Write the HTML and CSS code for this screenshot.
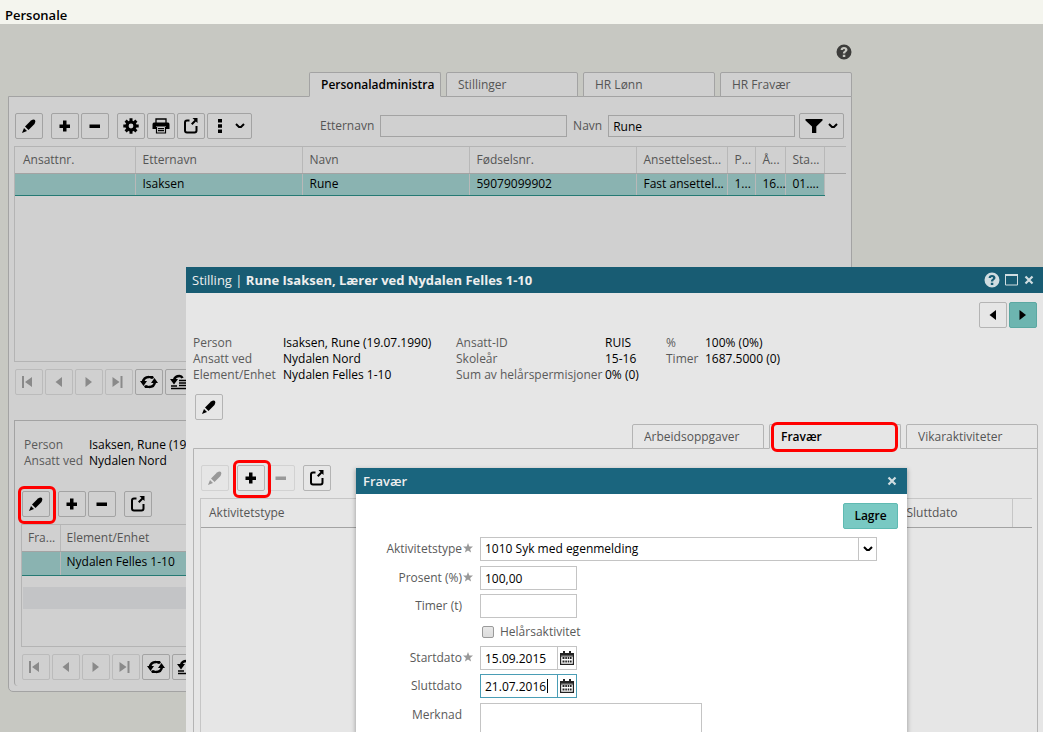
FILE: index.html
```html
<!DOCTYPE html>
<html lang="nb">
<head>
<meta charset="utf-8">
<title>Personale</title>
<link rel="stylesheet" href="styles.css">
</head>
<body>
<svg class="sprite" aria-hidden="true">
  <symbol id="pencil" viewBox="0 0 16 16"><path d="M1 15l2-5 3 3z"/><path d="M4 8.500L10 2.500Q12.500 1 14 2 15 3.500 13.500 6L7.500 12z"/></symbol>
  <symbol id="plus" viewBox="0 0 16 16"><path d="M6 2.500h3.500v4H13V10H9.500v3.500H6V10H2.500V6.500H6z"/></symbol>
  <symbol id="minus" viewBox="0 0 16 16"><path d="M2.500 6.500h10.500V10H2.500z"/></symbol>
  <symbol id="gear" viewBox="0 0 16 16"><g fill="none" stroke="currentColor"><circle cx="8" cy="8" r="4" stroke-width="3.200"/><path stroke-width="3" d="M8 .3v3M8 12.700v3M.3 8h3M12.700 8h3M2.600 2.600l2 2M11.400 11.400l2 2M2.600 13.400l2-2M11.400 4.600l2-2"/></g></symbol>
  <symbol id="print" viewBox="0 0 18 16"><path d="M4 5V1h10v4" fill="none" stroke="currentColor" stroke-width="1.300"/><path d="M2 4.500h14q1.500 0 1.500 2V11H14V8.500H4V11H.5V6.500q0-2 1.500-2z"/><path d="M4.500 9v6h9V9M6 10.700h6M6 12.700h6" fill="none" stroke="currentColor" stroke-width="1.200"/></symbol>
  <symbol id="export" viewBox="0 0 16 16"><path d="M6.500 2.500H4Q2 2.500 2 4.500v8q0 2 2 2h7.500q2 0 2-2V8" fill="none" stroke="currentColor" stroke-width="2"/><path d="M9.500 0h5v5l-1.600-1.600L9.500 7 8 5.500l3.500-3.500z"/></symbol>
  <symbol id="dots" viewBox="0 0 6 16"><path d="M1 1h4v3.500H1zM1 6.300h4v3.500H1zM1 11.600h4V15H1z"/></symbol>
  <symbol id="chevron" viewBox="0 0 10 8"><path d="M1 2l3 3h2l3-3" fill="none" stroke="currentColor" stroke-width="2"/></symbol>
  <symbol id="funnel" viewBox="0 0 17 16"><path d="M0 1h17v1.500L10.800 8.500V15H6.500V8.500L0 2.500z"/></symbol>
  <symbol id="first" viewBox="0 0 16 16"><path d="M1 2h2v12H1zM11 3v10L4 8z"/></symbol>
  <symbol id="prev" viewBox="0 0 16 16"><path d="M11 3v10L4.500 8z"/></symbol>
  <symbol id="next" viewBox="0 0 16 16"><path d="M4.500 3v10L11 8z"/></symbol>
  <symbol id="last" viewBox="0 0 16 16"><path d="M9.500 2h2v12h-2zM1.500 3v10l7-5z"/></symbol>
  <symbol id="refresh" viewBox="0 0 18 16"><path d="M3 8.500Q3.500 3 9 3M15 7.500Q14.500 13 9 13" fill="none" stroke="currentColor" stroke-width="2.600"/><path d="M0 7h7l-3.500 5zM18 9h-7l3.500-5z"/><path d="M9 2h4l1 2-2 1-3-1zM9 14H5l-1-2 2-1 3 1z"/></symbol>
  <symbol id="reload" viewBox="0 0 18 16"><path d="M4 6Q5 2 9.500 2q2 0 3 2" fill="none" stroke="currentColor" stroke-width="2.600"/><path d="M0 5h8l-4 5.500z"/><path d="M9 6.500h8M9 9h8M9 11.500h8M1 12h6M1 14.500h16" fill="none" stroke="currentColor" stroke-width="1.500"/></symbol>
  <symbol id="help" viewBox="0 0 16 16"><path fill-rule="evenodd" d="M8 .5a7.500 7.500 0 1 0 0 15 7.500 7.500 0 0 0 0-15zM4.600 6C4.700 4 6 2.900 8 2.900s3.500 1.100 3.500 2.900c0 2-2.300 2.200-2.300 3.500v.3H6.900v-.7c0-1.700 2.100-1.800 2.100-3 0-.5-.4-.9-1-.9S7 5.400 6.900 6zM6.800 10.700h2.500v2.300H6.800z"/></symbol>
  <symbol id="square" viewBox="0 0 14 12"><path d="M.5 1h12v10H.5z" fill="none" stroke="currentColor"/><path d="M0 0h13v2H0z"/></symbol>
  <symbol id="cross" viewBox="0 0 10 10"><path d="M1.500 1.500l7 7M8.500 1.500l-7 7" fill="none" stroke="currentColor" stroke-width="2.200"/></symbol>
  <symbol id="star" viewBox="0 0 10 10"><path d="M5 0l1.300 3.500L10 3.600 7.100 5.900 8.100 9.600 5 7.500 1.900 9.600l1-3.700L0 3.600l3.700-.1z"/></symbol>
  <symbol id="calendar" viewBox="0 0 14 14"><path d="M.6 2.600h12.800v10.800H.6zM.6 4.800h12.800" fill="none" stroke="currentColor" stroke-width="1.200"/><path d="M3 0h2v3.500H3zM9 0h2v3.500H9zM1 2.500h12V4H1zM2.500 6h2v2h-2zM5.300 6h1.600v2H5.300zM7.700 6h1.600v2H7.700zM10 6h1.600v2H10zM2.500 9.500h2v2h-2zM5.300 9.500h1.600v2H5.300zM7.700 9.500h1.600v2H7.700zM10 9.500h1.600v2H10z"/></symbol>
</svg>

<header class="top"><h1>Personale</h1></header>

<main class="page">
  <div class="help-row"><button class="bare" aria-label="Hjelp"><svg class="i16"><use href="#help"/></svg></button></div>
  <nav class="tabs" aria-label="Personale">
    <button class="tab active"><span>Personaladministra</span></button>
    <button class="tab"><span>Stillinger</span></button>
    <button class="tab"><span>HR Lønn</span></button>
    <button class="tab"><span>HR Fravær</span></button>
  </nav>
  <section class="panel">
    <div class="toolbar">
      <button class="btn" aria-label="Rediger"><svg class="i16"><use href="#pencil"/></svg></button>
      <div class="group">
        <button class="btn" aria-label="Ny"><svg class="i16"><use href="#plus"/></svg></button>
        <button class="btn" aria-label="Slett"><svg class="i16"><use href="#minus"/></svg></button>
      </div>
      <div class="group">
        <button class="btn" aria-label="Innstillinger"><svg class="i16"><use href="#gear"/></svg></button>
        <button class="btn" aria-label="Skriv ut"><svg class="i18"><use href="#print"/></svg></button>
        <button class="btn" aria-label="Eksporter"><svg class="i16"><use href="#export"/></svg></button>
        <button class="btn wide" aria-label="Mer"><svg class="dots"><use href="#dots"/></svg><svg class="chev"><use href="#chevron"/></svg></button>
      </div>
      <form class="search">
        <label for="etternavn">Etternavn</label><input id="etternavn" class="text" type="text">
        <label for="navn">Navn</label><input id="navn" class="text" type="text" value="Rune">
        <button type="button" class="btn wide filter" aria-label="Filter"><svg class="i18"><use href="#funnel"/></svg><svg class="chev"><use href="#chevron"/></svg></button>
      </form>
    </div>
    <div class="grid people">
      <table>
        <colgroup><col class="c120"><col class="c167"><col class="c167"><col class="c167"><col class="c91"><col class="c28"><col class="c30"><col class="c39"><col></colgroup>
        <thead><tr><th>Ansattnr.</th><th>Etternavn</th><th>Navn</th><th>Fødselsnr.</th><th>Ansettelsest...</th><th>P...</th><th>Å...</th><th>Sta...</th><th></th></tr></thead>
        <tbody><tr><td></td><td>Isaksen</td><td>Rune</td><td>59079099902</td><td>Fast ansettel...</td><td>1...</td><td>16...</td><td>01....</td><td class="rest"></td></tr></tbody>
      </table>
    </div>
    <div class="pager">
      <button class="btn" disabled aria-label="Første"><svg class="i16"><use href="#first"/></svg></button>
      <button class="btn" disabled aria-label="Forrige"><svg class="i16"><use href="#prev"/></svg></button>
      <button class="btn" disabled aria-label="Neste"><svg class="i16"><use href="#next"/></svg></button>
      <button class="btn" disabled aria-label="Siste"><svg class="i16"><use href="#last"/></svg></button>
      <button class="btn" aria-label="Oppdater"><svg class="i18"><use href="#refresh"/></svg></button>
      <button class="btn" aria-label="Hent alle"><svg class="i18"><use href="#reload"/></svg></button>
    </div>
    <section class="subpanel">
      <dl class="facts small">
        <dt>Person</dt><dd>Isaksen, Rune (19.07.1990)</dd>
        <dt>Ansatt ved</dt><dd>Nydalen Nord</dd>
      </dl>
      <div class="toolbar sub">
        <button class="btn marked" aria-label="Rediger stilling"><svg class="i16"><use href="#pencil"/></svg></button>
        <div class="group">
          <button class="btn" aria-label="Ny stilling"><svg class="i16"><use href="#plus"/></svg></button>
          <button class="btn" aria-label="Slett stilling"><svg class="i16"><use href="#minus"/></svg></button>
        </div>
        <button class="btn" aria-label="Eksporter stillinger"><svg class="i16"><use href="#export"/></svg></button>
      </div>
      <div class="grid posts">
        <table>
          <colgroup><col class="c38"><col></colgroup>
          <thead><tr><th>Fra...</th><th>Element/Enhet</th></tr></thead>
          <tbody><tr><td></td><td>Nydalen Felles 1-10</td></tr></tbody>
        </table>
        <div class="stripe"></div>
      </div>
      <div class="pager sub">
        <button class="btn" disabled aria-label="Første stilling"><svg class="i16"><use href="#first"/></svg></button>
        <button class="btn" disabled aria-label="Forrige stilling"><svg class="i16"><use href="#prev"/></svg></button>
        <button class="btn" disabled aria-label="Neste stilling"><svg class="i16"><use href="#next"/></svg></button>
        <button class="btn" disabled aria-label="Siste stilling"><svg class="i16"><use href="#last"/></svg></button>
        <button class="btn" aria-label="Oppdater stillinger"><svg class="i18"><use href="#refresh"/></svg></button>
        <button class="btn" aria-label="Hent alle stillinger"><svg class="i18"><use href="#reload"/></svg></button>
      </div>
    </section>
  </section>
</main>

<section class="window stilling" role="dialog" aria-label="Stilling">
  <header class="titlebar">
    <h2><span>Stilling | </span>Rune Isaksen, Lærer ved Nydalen Felles 1-10</h2>
    <div class="controls">
      <button class="bare" aria-label="Hjelp for stilling"><svg class="i16"><use href="#help"/></svg></button>
      <button class="bare" aria-label="Maksimer"><svg class="max"><use href="#square"/></svg></button>
      <button class="bare" aria-label="Lukk stilling"><svg class="x"><use href="#cross"/></svg></button>
    </div>
  </header>
  <div class="steps">
    <button class="btn" aria-label="Forrige person"><svg class="i16"><use href="#prev"/></svg></button>
    <button class="btn primary" aria-label="Neste person"><svg class="i16"><use href="#next"/></svg></button>
  </div>
  <div class="details">
    <dl class="facts a"><dt>Person</dt><dd>Isaksen, Rune (19.07.1990)</dd><dt>Ansatt ved</dt><dd>Nydalen Nord</dd><dt>Element/Enhet</dt><dd>Nydalen Felles 1-10</dd></dl>
    <dl class="facts b"><dt>Ansatt-ID</dt><dd>RUIS</dd><dt>Skoleår</dt><dd>15-16</dd><dt>Sum av helårspermisjoner</dt><dd>0% (0)</dd></dl>
    <dl class="facts c"><dt>%</dt><dd>100% (0%)</dd><dt>Timer</dt><dd>1687.5000 (0)</dd></dl>
  </div>
  <div class="edit-row"><button class="btn" aria-label="Rediger detaljer"><svg class="i16"><use href="#pencil"/></svg></button></div>
  <nav class="tabs inner" aria-label="Stilling">
    <button class="tab"><span>Arbeidsoppgaver</span></button>
    <button class="tab active marked-tab"><span>Fravær</span></button>
    <button class="tab"><span>Vikaraktiviteter</span></button>
  </nav>
  <section class="panel inner">
    <div class="toolbar">
      <button class="btn" disabled aria-label="Rediger fravær"><svg class="i16"><use href="#pencil"/></svg></button>
      <div class="group">
        <button class="btn marked" aria-label="Nytt fravær"><svg class="i16"><use href="#plus"/></svg></button>
        <button class="btn" disabled aria-label="Slett fravær"><svg class="i16"><use href="#minus"/></svg></button>
      </div>
      <button class="btn" aria-label="Eksporter fravær"><svg class="i16"><use href="#export"/></svg></button>
    </div>
    <div class="grid absence">
      <table>
        <colgroup><col><col class="c113"><col class="c20"></colgroup>
        <thead><tr><th>Aktivitetstype</th><th>Sluttdato</th><th></th></tr></thead>
      </table>
    </div>
  </section>
</section>

<section class="window fravaer" role="dialog" aria-label="Fravær">
  <header class="titlebar">
    <h2>Fravær</h2>
    <div class="controls"><button class="bare" aria-label="Lukk fravær"><svg class="x"><use href="#cross"/></svg></button></div>
  </header>
  <form class="form">
    <div class="actions"><button type="button" class="btn primary save">Lagre</button></div>
    <div class="row roomy">
      <label for="type">Aktivitetstype</label><svg class="star"><use href="#star"/></svg>
      <div class="select"><select id="type"><option>1010 Syk med egenmelding</option></select><span class="arrow"><svg class="chev"><use href="#chevron"/></svg></span></div>
    </div>
    <div class="row">
      <label for="prosent">Prosent (%)</label><svg class="star"><use href="#star"/></svg>
      <input id="prosent" class="text short" type="text" value="100,00">
    </div>
    <div class="row">
      <label for="timer">Timer (t)</label><i></i>
      <input id="timer" class="text short" type="text">
    </div>
    <div class="row check">
      <i></i><i></i>
      <div class="tick"><input id="helar" type="checkbox"><label for="helar">Helårsaktivitet</label></div>
    </div>
    <div class="row">
      <label for="start">Startdato</label><svg class="star"><use href="#star"/></svg>
      <div class="date"><input id="start" class="text" type="text" value="15.09.2015"><button type="button" aria-label="Velg startdato"><svg class="cal"><use href="#calendar"/></svg></button></div>
    </div>
    <div class="row roomy">
      <label for="slutt">Sluttdato</label><i></i>
      <div class="date focus"><input id="slutt" class="text" type="text" value="21.07.2016"><button type="button" aria-label="Velg sluttdato"><svg class="cal"><use href="#calendar"/></svg></button></div>
    </div>
    <div class="row">
      <label for="merknad">Merknad</label><i></i>
      <textarea id="merknad" class="text note" rows="3"></textarea>
    </div>
  </form>
</section>
</body>
</html>
```
FILE: styles.css
```css
* { box-sizing: border-box; }

body {
  margin: 0;
  height: 100vh;
  overflow: hidden;
  position: relative;
  background: #c7c8c2;
  color: #000;
  font: 12px/16px "Trebuchet MS", "Open Sans", "Noto Sans", sans-serif;
}

button, input, select, textarea { font: inherit; color: inherit; }
button { padding: 0; margin: 0; color: #000; }
h1, h2, dl, dd { margin: 0; }

.sprite { position: absolute; width: 0; height: 0; }
svg { display: block; fill: currentColor; flex: none; }
.i16 { width: 16px; height: 16px; }
.i18 { width: 18px; height: 16px; }
.dots { width: 6px; height: 16px; }
.chev { width: 10px; height: 8px; }
.x { width: 10px; height: 10px; }
.max { width: 14px; height: 12px; }
.cal { width: 14px; height: 14px; }
.star { width: 10px; height: 10px; color: #999; margin: 6px 0 0 1px; }

.top { height: 24px; padding: 7px 5px 0; background: #f4f5ee; }
.top h1 { font-size: 13px; line-height: 16px; font-weight: 600; }

.page { margin: 0 191px 0 8px; }
.help-row { display: flex; justify-content: flex-end; align-items: flex-start; padding-top: 20px; height: 48px; }
.bare { display: block; border: 0; background: none; color: inherit; }
.help-row .bare { color: #3d3d3b; }

.tabs { display: flex; justify-content: flex-end; gap: 5px; }
.tab {
  width: 132px;
  height: 25px;
  padding: 0 0 0 11px;
  margin-bottom: -1px;
  border: 1px solid #a3a3a3;
  border-radius: 2px 2px 0 0;
  background: #d0d0d0;
  color: #555;
  text-align: left;
  position: relative;
}
.tab span { display: block; overflow: hidden; white-space: nowrap; }
.tab.active { border-bottom-color: #d0d0d0; color: #000; font-weight: 600; }

.panel { border: 1px solid #a3a3a3; border-radius: 0 0 5px 5px; background: #d0d0d0; padding: 16px 7px 5px 6px; }

.toolbar { display: flex; gap: 8px; align-items: center; }
.group { display: flex; gap: 2px; }
.btn {
  display: flex;
  align-items: center;
  justify-content: center;
  flex: none;
  width: 28px;
  height: 26px;
  border: 1px solid #a3a3a3;
  border-radius: 2px;
  background: transparent;
  position: relative;
}
.btn.wide { width: 45px; gap: 12px; padding-left: 2px; }
.btn.filter { gap: 5px; padding-left: 0; }
.btn:disabled { border-color: #bbb; color: #8a8a8a; }
.btn.marked::after {
  content: "";
  position: absolute;
  inset: -6px -7px -8px -5px;
  border: 3px solid #f00;
  border-radius: 6px;
  z-index: 1;
}

.search { display: flex; align-items: center; flex: 1; margin-left: 60px; color: #555; }
.search label { margin-right: 6px; }
.text { height: 22px; min-width: 0; padding: 0 4px; border: 1px solid #a3a3a3; border-radius: 0; background: transparent; color: #000; outline: 0; }
.search .text { flex: 1; margin-right: 6px; }
.search .text:last-of-type { margin-right: 4px; }

.grid { border: 1px solid #b4b4b4; border-right: 0; margin-top: 7px; }
.grid.people { height: 216px; margin-left: -1px; margin-right: -2px; }
table { width: 100%; table-layout: fixed; border-collapse: collapse; }
.c20 { width: 20px; } .c28 { width: 28px; } .c30 { width: 30px; } .c38 { width: 38px; } .c39 { width: 39px; }
.c91 { width: 91px; } .c113 { width: 113px; } .c120 { width: 120px; } .c167 { width: 167px; }
th, td { height: 26px; padding: 0 0 0 7px; text-align: left; white-space: nowrap; font-weight: 400; border-right: 1px solid #b8b8b8; }
th { color: #555; border-bottom: 1px solid #a3a3a3; }
th:first-child { padding-left: 8px; }
td { height: 22px; background: #8ab3b1; border-bottom: 1px solid #257a74; }
th:last-child, td:last-child { border-right: 0; }
td.rest { background: none; border-bottom: 0; }

.pager { display: flex; gap: 2px; margin-top: 7px; }

.subpanel { margin: 25px -7px 0 -1px; border: 1px solid #a3a3a3; border-right: 0; border-bottom: 0; border-radius: 0 0 0 4px; padding: 16px 0 5px 7px; }
.facts { display: grid; align-content: start; white-space: nowrap; }
.facts dt { color: #5a5a5a; }
.facts.small { grid-template-columns: 65px 1fr; padding-left: 2px; }
.toolbar.sub { margin-top: 22px; }
.grid.posts { height: 123px; margin-left: -1px; }
.posts td { height: 24px; padding-bottom: 2px; }
.posts th, .posts td { padding-left: 6px; }
.stripe { height: 22px; margin: 11px 0 0 1px; background: #c3c4c6; }
.pager.sub { margin-bottom: 1px; }

.window { position: absolute; }
.titlebar { display: flex; justify-content: space-between; align-items: center; height: 26px; padding: 0 9px 0 6px; background: #185c73; color: #fff; }
.titlebar h2 { font-size: 13px; line-height: 18px; font-weight: 700; white-space: nowrap; color: #eee; }
.titlebar h2 span { font-weight: 400; }
.controls { display: flex; align-items: center; gap: 5px; color: #d0dde1; }

.stilling { left: 186px; right: 0; top: 267px; bottom: 0; overflow: hidden; background: #e6e6e6; }
.steps { display: flex; justify-content: flex-end; gap: 2px; padding: 9px 6px 0; }
.primary { background: #6db5b0; border-color: #5ba8a2; }
.details { display: flex; padding: 7px 7px 0; }
.facts.a { grid-template-columns: 90px 173px; }
.facts.b { grid-template-columns: 149px 61px; }
.facts.c { grid-template-columns: 39px 1fr; }
.edit-row { padding: 11px 9px 4px; }
.tabs.inner { padding-right: 5px; }
.inner .tab { border-color: #b4b4b4; background: #e6e6e6; }
.inner .tab.active { border-bottom-color: #e6e6e6; }
.marked-tab::after { content: ""; position: absolute; inset: -3px 2px -4px 1px; border: 3px solid #f00; border-radius: 6px; }
.panel.inner { margin: 0 5px 0 7px; min-height: 300px; border-color: #b4b4b4; background: #e6e6e6; padding: 16px 5px 0 7px; }
.stilling .btn { border-color: #b4b4b4; }
.stilling .btn.primary { border-color: #5ba8a2; }
.stilling .btn:disabled { border-color: #d2d2d2; color: #999; }
.grid.absence { height: 300px; margin-left: -1px; border-color: #c6c6c6; }
.absence th { height: 28px; border-right-color: #c6c6c6; }

.fravaer { left: 356px; width: 551px; top: 468px; bottom: 0; overflow: hidden; background: #fff; box-shadow: 0 2px 4px 1px #00000040; }
.fravaer .titlebar { background: #1a657e; padding: 0 10px 0 7px; }
.fravaer .titlebar h2 { font-weight: 600; }
.form { padding: 9px 9px 0; color: #5a5a5a; }
.actions { display: flex; justify-content: flex-end; margin-bottom: 8px; }
.save { width: 55px; background: #79c9c3; border-color: #5fbab2; font-weight: 600; }
.row { display: grid; grid-template-columns: 97px 18px 1fr; align-items: start; margin-bottom: 4px; }
.row.roomy { margin-bottom: 5px; }
.row > label { text-align: right; padding-top: 4px; }
.form .text { height: 24px; border-color: #c4c4c4; background: #fff; }
.form .short { width: 97px; }
.select { position: relative; width: 397px; }
.select select { display: block; appearance: none; width: 100%; height: 24px; padding: 0 24px 0 4px; border: 1px solid #c4c4c4; border-radius: 0; background: #fff; color: #000; outline: 0; }
.arrow { position: absolute; right: 1px; top: 1px; bottom: 1px; width: 18px; display: grid; place-items: center; border-left: 1px solid #c4c4c4; color: #000; pointer-events: none; }
.row.check { height: 20px; align-items: center; }
.tick { display: flex; align-items: center; gap: 6px; padding-left: 2px; }
.tick input { appearance: none; width: 12px; height: 12px; margin: 0; border: 1px solid #9a9a9a; border-radius: 2px; background: linear-gradient(#e8e8e8, #ddd); }
.date { display: flex; position: relative; width: 97px; border: 1px solid #c4c4c4; }
.date .text { flex: 1; height: 22px; border: 0; }
.date button { display: grid; place-items: center; width: 19px; height: 22px; border: 0; border-left: 1px solid #c4c4c4; background: #fff; color: #222; }
.date.focus, .date.focus button { border-color: #4a9db5; }
.date.focus::after { content: ""; position: absolute; left: 66px; top: 4px; width: 1px; height: 14px; background: #000; }
.form .note { width: 222px; height: 60px; resize: none; }
```
